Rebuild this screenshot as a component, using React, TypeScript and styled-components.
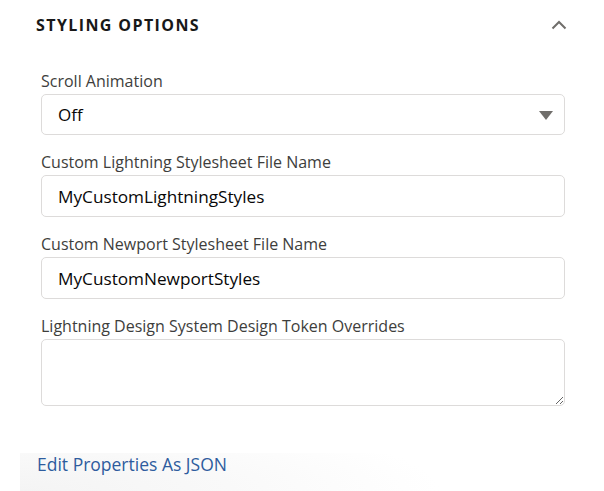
import styled, { createGlobalStyle } from 'styled-components';

const GlobalStyle = createGlobalStyle`
body {
  margin: 0;
  background: #FFFFFF;
  font-family: "Open Sans", "Liberation Sans", sans-serif;
}
* { box-sizing: border-box; }
`

const Panel = styled.div`
width: 604px;
height: 491px;
display: flex;
flex-direction: column;
overflow: hidden;
`
const SectionHeader = styled.div`
display: flex;
align-items: center;
justify-content: space-between;
padding: 14px 37px 0 36px;
height: 36px;
`
const SectionTitle = styled.h2`
margin: 0;
font-size: 16px;
font-weight: 700;
letter-spacing: 1.4px;
color: #181818;
line-height: 22px;
`
const Fields = styled.div`
display: flex;
flex-direction: column;
gap: 17px;
padding: 35px 39px 0 41px;
`
const Field = styled.div`
display: flex;
flex-direction: column;
gap: 3px;
`
const Label = styled.label`
font-size: 16px;
line-height: 20px;
color: #3e3e3c;
`
const SelectWrap = styled.div`
position: relative;
`
const Select = styled.select`
appearance: none;
width: 100%;
height: 41px;
border: 1px solid #dddbda;
border-radius: 5px;
background: #fff;
padding: 0 40px 0 16px;
font-family: inherit;
font-size: 17px;
color: #080707;
`
const Caret = styled.svg`
position: absolute;
right: 12px;
top: 17px;
pointer-events: none;
`
const TextInput = styled.input`
width: 100%;
height: 42px;
border: 1px solid #dddbda;
border-radius: 5px;
background: #fff;
padding: 0 16px;
font-family: inherit;
font-size: 17.2px;
color: #080707;
`
const TextArea = styled.textarea`
width: 100%;
height: 67px;
border: 1px solid #dddbda;
border-radius: 5px;
background: #fff;
padding: 8px 16px;
font-family: inherit;
font-size: 17px;
resize: vertical;
display: block;
`
const Footer = styled.div`
margin: 47px 0 0 20px;
height: 38px;
padding-left: 17px;
background: radial-gradient(ellipse 420px 80px at 0% 100%, #f4f4f4 0%, #f9f9f9 50%, #ffffff 100%);
`
const JsonLink = styled.a`
font-size: 17.5px;
line-height: 22px;
color: #2e5c9e;
text-decoration: none;
cursor: pointer;
`
const ToggleButton = styled.button`
border: none;
background: none;
padding: 0;
display: flex;
cursor: pointer;
`

export default function App() {
  return (
    <>
      <GlobalStyle />
      <Panel>
        <SectionHeader>
          <SectionTitle>STYLING OPTIONS</SectionTitle>
          <ToggleButton aria-label="Collapse">
            <svg width="16" height="10" viewBox="0 0 16 10">
              <path d="M1.5 8.5 L8 2 L14.5 8.5" fill="none" stroke="#706e6b" strokeWidth="2" />
            </svg>
          </ToggleButton>
        </SectionHeader>
        <Fields>
          <Field>
            <Label>Scroll Animation</Label>
            <SelectWrap>
              <Select defaultValue="Off">
                <option>Off</option>
                <option>On</option>
              </Select>
              <Caret width="14" height="9" viewBox="0 0 14 9">
                <path d="M0 0 H14 L7 9 Z" fill="#706e6b" />
              </Caret>
            </SelectWrap>
          </Field>
          <Field>
            <Label>Custom Lightning Stylesheet File Name</Label>
            <TextInput defaultValue="MyCustomLightningStyles" />
          </Field>
          <Field>
            <Label>Custom Newport Stylesheet File Name</Label>
            <TextInput defaultValue="MyCustomNewportStyles" />
          </Field>
          <Field>
            <Label>Lightning Design System Design Token Overrides</Label>
            <TextArea />
          </Field>
        </Fields>
        <Footer>
          <JsonLink>Edit Properties As JSON</JsonLink>
        </Footer>
      </Panel>
    </>
  );
}
